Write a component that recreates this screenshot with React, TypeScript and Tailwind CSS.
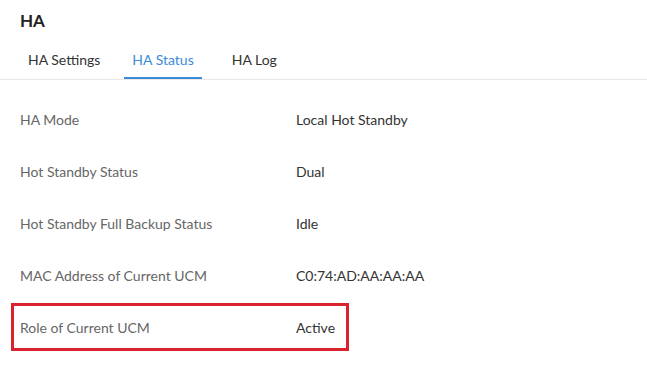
import React from "react";

const rows: [string, string][] = [
  ["HA Mode", "Local Hot Standby"],
  ["Hot Standby Status", "Dual"],
  ["Hot Standby Full Backup Status", "Idle"],
  ["MAC Address of Current UCM", "C0:74:AD:AA:AA:AA"],
  ["Role of Current UCM", "Active"],
];

export default function App() {
  return (
    <div
      className="w-[647px] h-[369px] bg-white overflow-hidden"
      style={{ fontFamily: "Lato, 'Open Sans', sans-serif" }}
    >
      <div className="pl-[20px] pt-[8px] h-[40px] text-[17px] font-bold text-[#222]">HA</div>
      <div className="flex border-b border-[#e8e8e8] pl-[20px] h-[40px]">
        <div className="px-2 h-full flex items-center text-[14px] text-[#333]">HA Settings</div>
        <div className="ml-[16px] px-2 h-full flex items-center text-[14px] text-[#3c8bd8] border-b-[2px] border-[#3c8bd8] pt-[2px]">
          HA Status
        </div>
        <div className="ml-[22px] px-2 h-full flex items-center text-[14px] text-[#333]">HA Log</div>
      </div>
      <div className="pt-[13px]">
        {rows.map(([k, v], i) => (
          <div key={k} className="relative flex items-center h-[52px] pl-[20px] text-[14px]">
            <div className="w-[276px] text-[#666]">{k}</div>
            <div className="text-[#333]">{v}</div>
            {i === 4 && (
              <div className="absolute left-[11px] top-[2px] w-[338px] h-[48px] border-[3px] border-[#d9232e] pointer-events-none" />
            )}
          </div>
        ))}
      </div>
    </div>
  );
}
